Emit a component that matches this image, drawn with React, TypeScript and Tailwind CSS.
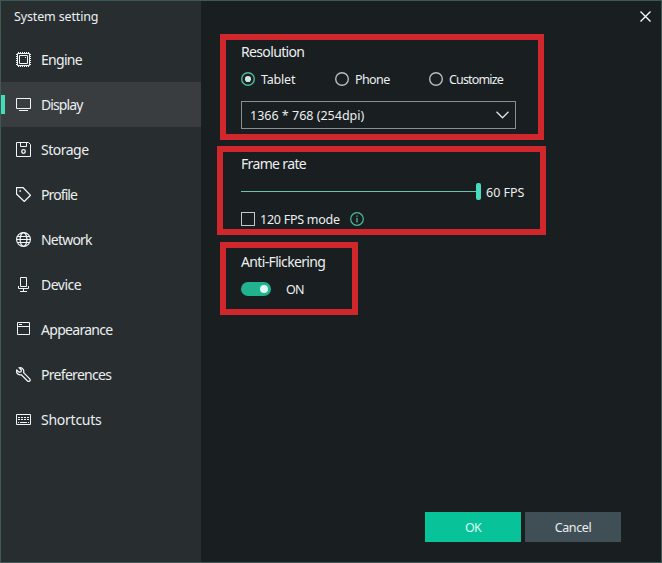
import type { ReactNode } from 'react'
import clsx from 'clsx'

type NavItem = { label: string; icon: ReactNode; tracking: string }

const navItems: NavItem[] = [
  {
    label: 'Engine',
    tracking: 'tracking-[-0.7px]',
    icon: (
      <>
        <path d="M1.5 1.5h12v12h-12z" />
        <path d="M3.5 3.5h8v8h-8z" />
        <path d="M2.5 0v1M4.5 0v1M6.5 0v1M8.5 0v1M10.5 0v1M12.5 0v1M2.5 14v1M4.5 14v1M6.5 14v1M8.5 14v1M10.5 14v1M12.5 14v1M0 2.5h1M0 4.5h1M0 6.5h1M0 8.5h1M0 10.5h1M0 12.5h1M14 2.5h1M14 4.5h1M14 6.5h1M14 8.5h1M14 10.5h1M14 12.5h1M9 5.5h1" />
      </>
    ),
  },
  {
    label: 'Display',
    tracking: 'tracking-[-0.9px]',
    icon: (
      <>
        <path d="M.5 1.5h14v10H.5z" />
        <path d="M3 13.5h9" />
      </>
    ),
  },
  {
    label: 'Storage',
    tracking: 'tracking-[-0.5px]',
    icon: (
      <>
        <path d="M.5.5h12l2 2v12H.5z" />
        <path d="M4.5.5v4h6v-4" />
        <circle cx="7.5" cy="9.5" r="1.8" strokeWidth="1.3" />
      </>
    ),
  },
  {
    label: 'Profile',
    tracking: 'tracking-[-0.9px]',
    icon: (
      <>
        <path d="M.5.5H7l7.5 7.8-6.2 6.2L.5 7z" strokeWidth="1.25" />
        <path d="M3.4 4h1.6" strokeWidth="1.5" />
      </>
    ),
  },
  {
    label: 'Network',
    tracking: 'tracking-[-0.8px]',
    icon: (
      <>
        <circle cx="7.5" cy="7.5" r="6.9" strokeWidth="1.2" />
        <ellipse cx="7.5" cy="7.5" rx="3.4" ry="6.9" strokeWidth="1.2" />
        <path d="M1.5 4.5h12M1.5 10.5h12M.5 7.5h14" />
      </>
    ),
  },
  {
    label: 'Device',
    tracking: 'tracking-[-0.5px]',
    icon: (
      <>
        <path d="M4.5.5h6v9h-6z" />
        <path d="M2.5 9v2.5h10V9M7.5 11.5v3M4 14.5h7" />
      </>
    ),
  },
  {
    label: 'Appearance',
    tracking: 'tracking-[-0.7px]',
    icon: (
      <>
        <path d="M1.5.5h12v12h-12z" />
        <path d="M1.5 4.5h12M3 2.5h3" />
      </>
    ),
  },
  {
    label: 'Preferences',
    tracking: 'tracking-[-0.7px]',
    icon: (
      <path
        strokeWidth="1.25"
        d="M3.2.8 5.4 3 5 4.8l-1.8.4L.8 3C.3 4.5.7 6 1.8 7c1 .9 2.3 1.2 3.5.8l6.2 6.2c.7.6 1.6.6 2.2 0s.6-1.5 0-2.2L7.6 5.6c.4-1.3.1-2.7-.8-3.7C5.9.8 4.5.4 3.2.8z"
      />
    ),
  },
  {
    label: 'Shortcuts',
    tracking: 'tracking-[-0.25px]',
    icon: (
      <>
        <path d="M.5 2.5h14v10H.5z" />
        <path d="M2 5.5h11M2 7.5h11" strokeDasharray="2 1" />
        <path d="M2 10.5h1M4 10.5h7M12 10.5h1" />
      </>
    ),
  },
]

function Highlight({ className, children }: { className: string; children: ReactNode }) {
  return <section className={clsx('border-6 border-[#cf272c]', className)}>{children}</section>
}

function Heading({ children }: { children: ReactNode }) {
  return <h2 className="text-[14px] leading-5 tracking-[-0.65px] whitespace-nowrap">{children}</h2>
}

function Radio({ label, checked = false, tracking }: { label: string; checked?: boolean; tracking: string }) {
  return (
    <label className="flex w-[94px] items-center gap-[6px]">
      <svg viewBox="0 0 14 14" className="size-[14px] shrink-0 fill-none stroke-[1.4]">
        <circle cx="7" cy="7" r="6.3" className={checked ? 'stroke-[#4fb99f]' : 'stroke-[#b9bcbd]'} />
        {checked && <circle cx="7" cy="7" r="3.1" className="fill-[#d3e5df]" />}
      </svg>
      <span className={clsx('pt-[2px] leading-4', tracking)}>{label}</span>
    </label>
  )
}

function Sidebar() {
  return (
    <aside className="w-[200px] shrink-0 bg-[#282e30]">
      <h1 className="h-9 pt-2 pl-[13px] text-[12.5px] leading-4 tracking-[-0.15px]">System setting</h1>
      <nav>
        {navItems.map((item) => {
          const active = item.label === 'Display'
          return (
            <a key={item.label} className={clsx('flex h-[45px] items-center', active && 'bg-[#393d40]')}>
              <span className={clsx('h-[19px] w-1', active && 'bg-[#46dcb9]')} />
              <svg viewBox="0 0 15 15" className="ml-[11px] size-[15px] fill-none stroke-[#f2f5f5]">
                {item.icon}
              </svg>
              <span className={clsx('ml-[10px] text-[14px] leading-5', item.tracking)}>{item.label}</span>
            </a>
          )
        })}
      </nav>
    </aside>
  )
}

export default function App() {
  return (
    <div className="flex h-[563px] w-[662px] overflow-hidden border border-[#3b5a56] bg-[#191e20] font-['Noto_Sans','Open_Sans',sans-serif] text-[12.5px] text-[#eceff0]">
      <Sidebar />
      <main className="relative flex grow flex-col pt-[33px] pl-[19px]">
        <button className="absolute top-[10px] right-[10px]" aria-label="Close">
          <svg viewBox="0 0 11 11" className="size-[11px] fill-none stroke-white stroke-[1.3]">
            <path d="m.5.5 10 10M10.5.5l-10 10" />
          </svg>
        </button>

        <Highlight className="h-[106px] w-[324px] pt-[2px] pl-[15px]">
          <Heading>Resolution</Heading>
          <div className="mt-[9px] flex h-4 items-center">
            <Radio label="Tablet" tracking="tracking-[-0.2px]" checked />
            <Radio label="Phone" tracking="tracking-[-0.6px]" />
            <Radio label="Customize" tracking="tracking-[-0.85px]" />
          </div>
          <div className="mt-[14px] flex h-7 w-[275px] items-center justify-between border border-[#8c8f91] pr-[6px] pl-2">
            <span className="pt-[2px]">1366 * 768 (254dpi)</span>
            <svg viewBox="0 0 13 8" className="h-2 w-[13px] fill-none stroke-[#dfe2e2] stroke-[1.3]">
              <path d="m.5.8 6 6 6-6" />
            </svg>
          </div>
        </Highlight>

        <Highlight className="mt-[6px] -ml-[3px] h-[89px] w-[329px] pt-[2px] pl-[18px]">
          <Heading>Frame rate</Heading>
          <div className="mt-[9px] flex h-[17px] items-center">
            <span className="h-px w-[235px] bg-[#6cc4ae]" />
            <span className="h-[17px] w-[5px] rounded-[2px] bg-[#46dcbf]" />
            <span className="ml-[5px] pt-[3px] whitespace-nowrap">60 FPS</span>
          </div>
          <div className="mt-[11px] flex h-4 items-center">
            <span className="size-[14px] border border-[#c5c8c9]" />
            <span className="ml-[5px] pt-[2px] tracking-[-0.25px]">120 FPS mode</span>
            <svg viewBox="0 0 14 14" className="ml-[10px] size-[14px] fill-none stroke-[#4fb99f]">
              <circle cx="7" cy="7" r="6.3" strokeWidth="1.2" />
              <path d="M7 3.5v1.3M7 6v4.5" strokeWidth="1.3" />
            </svg>
          </div>
        </Highlight>

        <Highlight className="mt-[7px] h-[73px] w-[138px] pt-[4px] pl-[15px]">
          <Heading>Anti-Flickering</Heading>
          <div className="mt-[9px] flex h-4 items-center">
            <span className="flex h-[14px] w-[30px] items-center justify-end rounded-full bg-[#21b28f] pr-[3px]">
              <span className="size-2 rounded-full bg-[#dcfaf1]" />
            </span>
            <span className="ml-[15px] pt-[2px] tracking-[-0.8px]">ON</span>
          </div>
        </Highlight>

        <footer className="mt-auto mr-[40px] mb-5 flex justify-end gap-1">
          <button className="h-[30px] w-24 bg-[#08c299] pt-[2px] tracking-[-0.8px] text-[#d9fff4]">OK</button>
          <button className="h-[30px] w-24 bg-[#404e56] pt-[2px] tracking-[-0.4px]">Cancel</button>
        </footer>
      </main>
    </div>
  )
}
